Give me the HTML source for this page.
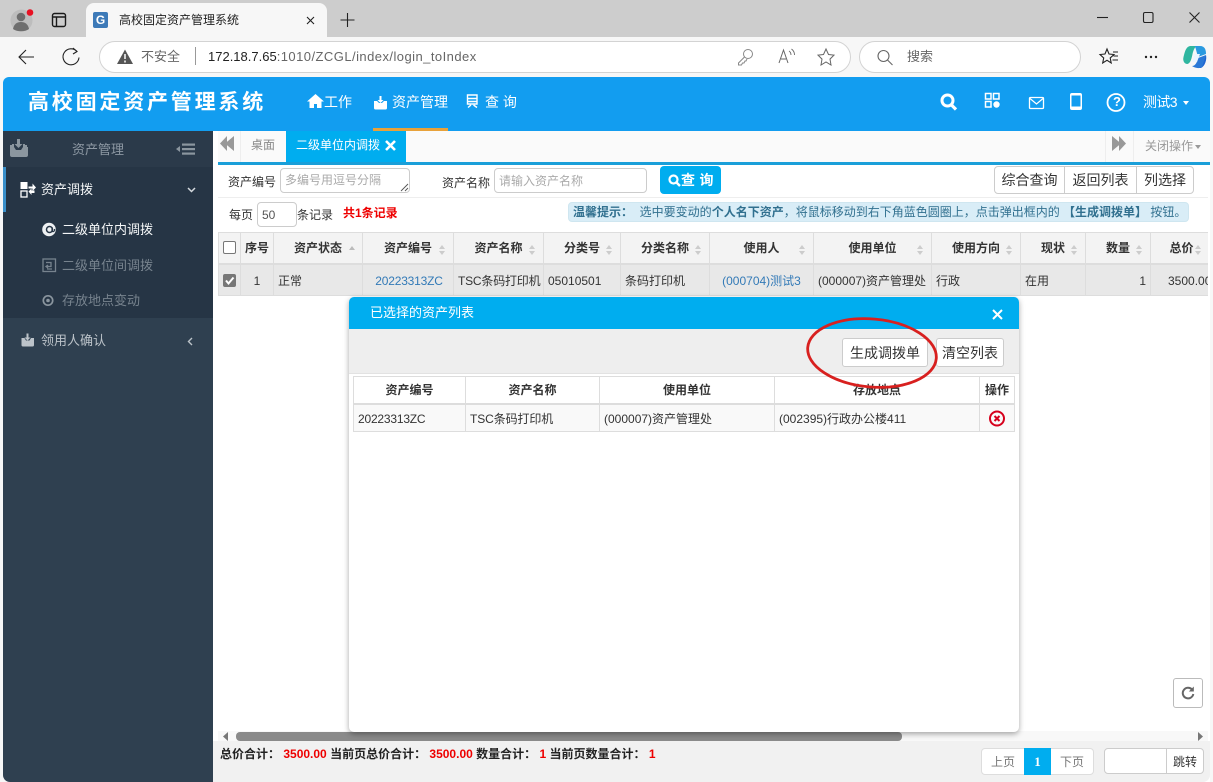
<!DOCTYPE html>
<html lang="zh"><head><meta charset="utf-8"><title>高校固定资产管理系统</title>
<style>
*{box-sizing:border-box}
html,body{margin:0;padding:0;width:1213px;height:782px;overflow:hidden;background:#f7f7f7;font-family:"Liberation Sans","Noto Sans CJK SC",sans-serif;font-size:12px;color:#333}
.a{position:absolute}
.t{position:absolute;white-space:nowrap;line-height:16px}
svg{position:absolute;overflow:visible}
.th{position:absolute;top:232px;height:33px;background:#f3f3f3;border-right:1px solid #ddd;border-top:1px solid #ddd;border-bottom:2px solid #ddd;font-weight:bold;font-size:12px;line-height:30px;text-align:center;color:#333}
.td{position:absolute;top:265px;height:31px;background:#e8e8e8;border-right:1px solid #ddd;border-bottom:1px solid #ddd;font-size:12px;line-height:32px;padding:0 4px;white-space:nowrap;overflow:hidden;color:#333}
.s{position:absolute;right:7px;top:12px;width:7px;height:10px}
.s:before{content:"";position:absolute;left:0;top:0;border:3.5px solid transparent;border-top:0;border-bottom:4px solid #ccc}
.s:after{content:"";position:absolute;left:0;top:6px;border:3.5px solid transparent;border-bottom:0;border-top:4px solid #ccc}
.btn{position:absolute;background:#fff;border:1px solid #ccc;font-size:14px;text-align:center;color:#333}
.mth{position:absolute;top:376px;height:29px;background:#fff;border:1px solid #ddd;border-left:0;border-bottom:2px solid #ddd;font-weight:bold;font-size:12px;line-height:27px;text-align:center}
.mtd{position:absolute;top:405px;height:27px;background:#f9f9f9;border-right:1px solid #ddd;border-bottom:1px solid #ddd;font-size:12px;line-height:28px;padding-left:4px;white-space:nowrap}
</style></head><body>

<!-- browser chrome -->
<div class="a" style="left:0;top:0;width:1213px;height:37px;background:#cdcdcd"></div>
<div class="a" style="left:0;top:37px;width:1213px;height:40px;background:#f7f7f7"></div>
<div class="a" style="left:86px;top:3px;width:241px;height:35px;background:#f7f7f7;border-radius:8px 8px 0 0"></div>
<svg style="left:0;top:0" width="120" height="37">
<circle cx="21.500" cy="20.500" r="11" fill="#bdbdbd"/><circle cx="21" cy="17" r="4.300" fill="#6e6e6e"/><path d="M13 29c1-5 4-7 8-7s7 2 8 7c-4 3-12 3-16 0z" fill="#6e6e6e"/>
<circle cx="30" cy="12.500" r="3.300" fill="#e81123"/>
<rect x="52.500" y="13.500" width="13" height="13" rx="2" fill="none" stroke="#1a1a1a" stroke-width="1.400"/><path d="M53 17h12M56.500 17v9" stroke="#1a1a1a" stroke-width="1.400" fill="none"/>
</svg>
<div class="a" style="left:93px;top:12px;width:15px;height:16px;background:#3d7ab8;border-radius:2px;color:#fff;font-weight:bold;font-size:12px;text-align:center;line-height:16px">G</div>
<div class="t" style="left:119px;top:12px;font-size:12px;color:#222">高校固定资产管理系统</div>
<svg style="left:300px;top:7px" width="60" height="30" fill="none" stroke="#222" stroke-width="1.100">
<path d="M7 10l7 7M14 10l-7 7"/><path d="M47.500 6v14M40.500 13h14"/></svg>
<svg style="left:1090px;top:0" width="123" height="37" fill="none" stroke="#222" stroke-width="1.100">
<path d="M7 17.500h11"/><rect x="53.500" y="12.500" width="9.500" height="10" rx="1.500"/><path d="M99.500 12.500l10 10M109.500 12.500l-10 10"/></svg>

<svg style="left:0;top:37px" width="100" height="40" fill="none" stroke="#222" stroke-width="1.100">
<path d="M34 20H19M26 13l-7 7 7 7"/><path d="M77 14.500a8 8 0 1 0 2 6" /><path d="M73 11l4 3.500-4 2.500" /></svg>
<div class="a" style="left:99px;top:41px;width:752px;height:32px;background:#fff;border:1px solid #d3d3d3;border-radius:16px"></div>
<svg style="left:116px;top:49px" width="20" height="16"><path d="M9 0.500L17 15H1z" fill="#555"/><path d="M9 5v5M9 11.500v2" stroke="#fff" stroke-width="1.500"/></svg>
<div class="t" style="left:141px;top:49px;font-size:13px;color:#666">不安全</div>
<div class="a" style="left:195px;top:47px;width:1px;height:18px;background:#999"></div>
<div class="t" style="left:208px;top:49px;font-size:13px;color:#666"><span style="color:#222">172.18.7.65</span><span style="letter-spacing:.45px">:1010/ZCGL/index/login_toIndex</span></div>
<svg style="left:730px;top:45px" width="110" height="24" fill="none" stroke="#888" stroke-width="1">
<circle cx="18" cy="9" r="4.500"/><path d="M14.500 12l-6 6v2h3l1-2h1.500l1-2h1l1-2"/>
<path d="M49 18l4.500-13 4.500 13M51 14h5" stroke="#666"/><path d="M59 6c1.500 1 2 2.500 2 4M61.500 4c2 1.500 3 3.500 3 6" stroke="#666" stroke-width="0.900"/>
<path d="M96 4l2.500 5.500 5.500.6-4 4 1 5.900-5-3-5 3 1-5.900-4-4 5.500-.6z" stroke="#666"/></svg>
<div class="a" style="left:859px;top:41px;width:222px;height:32px;background:#fff;border:1px solid #d3d3d3;border-radius:16px"></div>
<svg style="left:876px;top:49px" width="18" height="18" fill="none" stroke="#666" stroke-width="1.100"><circle cx="7.500" cy="7" r="5.500"/><path d="M11.500 11l5 5"/></svg>
<div class="t" style="left:907px;top:49px;font-size:13px;color:#666">搜索</div>
<svg style="left:1098px;top:45px" width="110" height="26" fill="none" stroke="#222" stroke-width="1.100">
<path d="M9 4l2 5 5 .5-3.800 3.500 1 5-4.200-2.700-4.300 2.700 1-5L2 9.500 7 9z"/><path d="M15 7h5M15.500 11h4.500M14.500 15h5.500" stroke-width="1"/>
<circle cx="48" cy="12" r="1.200" fill="#222" stroke="none"/><circle cx="53" cy="12" r="1.200" fill="#222" stroke="none"/><circle cx="58" cy="12" r="1.200" fill="#222" stroke="none"/>
</svg>
<svg style="left:1182px;top:45px" width="26" height="24">
<path d="M8 1C4 2 3 6 1.500 12c-1 4 1 7 4 7 3-1 4-5 5-10 1-4 2-7 5-8z" fill="#2fb6a0"/>
<path d="M13 1h5c5 0 6 4 6 8l-8 3z" fill="#2a9ae0"/>
<path d="M9 23h7c3-1 5-5 6-9l2-4c1 5-1 11-5 13z" fill="#1f66d1"/>
<path d="M10 21c3 0 5-3 6-8l8-3-4 12c-3 2-7 1-10-1z" fill="#2a78d6"/>
<path d="M13 9h5l-3 8h-5z" fill="#eaf5ff"/>
</svg>

<!-- app header -->
<div class="a" style="left:3px;top:77px;width:1207px;height:54px;background:#129df0;border-radius:6px 6px 0 0"></div>
<div class="t" style="left:28px;top:91px;font-size:21px;line-height:24px;font-weight:bold;color:#fff;letter-spacing:2.800px">高校固定资产管理系统</div>
<svg style="left:307px;top:93px" width="20" height="16" fill="#fff"><path d="M8.500 1L0 8.500h2.500V15H7v-4h3v4h4.500V8.500H17z"/></svg>
<div class="t" style="left:324px;top:94px;font-size:14px;color:#fff">工作</div>
<svg style="left:373px;top:95px" width="16" height="15"><path d="M1 6h3l2 2h3l2-2h3v7a1.500 1.500 0 0 1-1.500 1.500h-10A1.500 1.500 0 0 1 1 13z" fill="#fff"/><path d="M6.500 1h2v4h2L7.500 8l-3-3h2z" fill="#fff"/></svg>
<div class="t" style="left:392px;top:94px;font-size:14px;color:#fff">资产管理</div>
<div class="a" style="left:373px;top:128px;width:75px;height:3px;background:#e8a23a"></div>
<svg style="left:466px;top:94px" width="14" height="16" fill="none" stroke="#fff" stroke-width="1.400"><path d="M1.500 1h9.500v9H1.500zM1.500 4.500H11M1.500 7.500H11M2 13.500l3-2.500M11 13.500L7.500 11"/></svg>
<div class="t" style="left:485px;top:94px;font-size:14px;color:#fff">查 询</div>
<svg style="left:940px;top:92px" width="240" height="22" fill="none" stroke="#fff">
<circle cx="7.500" cy="8.500" r="5.500" stroke-width="3"/><path d="M11.500 13l4.500 4.500" stroke-width="3.200"/>
<rect x="45.500" y="1.500" width="5.500" height="5.500" stroke-width="1.500"/><rect x="53.500" y="1.500" width="5.500" height="5.500" stroke-width="1.500"/><rect x="45.500" y="9.500" width="5.500" height="5.500" stroke-width="1.500"/><circle cx="56.500" cy="12.500" r="3.200" fill="#fff" stroke="none"/>
<rect x="89.500" y="5.500" width="14" height="11" rx="1" stroke-width="1.300"/><path d="M90 6.500l6.500 5.500 6.500-5.500" stroke-width="1.200"/>
<rect x="130" y="1" width="12" height="17" rx="2" fill="#fff" stroke="none"/><rect x="131.500" y="3.500" width="9" height="11" fill="#129df0" stroke="none"/>
<circle cx="176" cy="10.500" r="8.500" stroke-width="1.800"/>
</svg>
<div class="t" style="left:1113px;top:94px;font-size:13px;font-weight:bold;color:#fff">?</div>
<div class="t" style="left:1143px;top:94px;font-size:14px;letter-spacing:-.6px;color:#fff">测试3</div>
<div class="a" style="left:1183px;top:101px;border:3.500px solid transparent;border-top:4px solid #fff;border-bottom:0"></div>

<!-- sidebar -->
<div class="a" style="left:3px;top:131px;width:210px;height:651px;background:#2f4050;border-radius:0 0 0 7px"></div>
<div class="a" style="left:3px;top:131px;width:210px;height:36px;background:#2b3a4a"></div>
<div class="a" style="left:3px;top:167px;width:210px;height:151px;background:#263545"></div>
<div class="a" style="left:3px;top:167px;width:3px;height:45px;background:#3a8fc9"></div>
<svg style="left:9px;top:138px" width="20" height="21"><path d="M1 8h3v-2M18 8h-3v-2" fill="none" stroke="#8b969f" stroke-width="2"/><path d="M1 9h4l2 3h5l2-3h5v8a2 2 0 0 1-2 2H3a2 2 0 0 1-2-2z" fill="#8b969f"/><path d="M8 1h3v5h2.500l-4 4-4-4H8z" fill="#8b969f"/></svg>
<div class="t" style="left:72px;top:142px;font-size:13px;color:#8d98a3">资产管理</div>
<svg style="left:176px;top:143px" width="20" height="13" fill="#8b969f"><path d="M0 6l4-3v6z"/><rect x="6" y="0.500" width="13" height="2.200"/><rect x="6" y="5" width="13" height="2.200"/><rect x="6" y="9.500" width="13" height="2.200"/></svg>
<svg style="left:20px;top:181px" width="17" height="17"><rect x="0.500" y="1" width="7" height="7" fill="#fff"/><rect x="1" y="10" width="6" height="6" fill="none" stroke="#fff" stroke-width="1.300"/><path d="M9 1h2v15H9z" fill="#263545"/><path d="M8.500 5.500h4V2.500l3.500 4-3.500 3.500v-2.500h-4zM8.500 10.500l3-3v2h3v2.500h-3v2z" fill="#fff"/></svg>
<div class="t" style="left:41px;top:182px;font-size:13px;color:#f4f6f7">资产调拨</div>
<svg style="left:187px;top:187px" width="9" height="6" fill="none" stroke="#d5dadf" stroke-width="1.500"><path d="M1 1L4.500 4.500 8 1"/></svg>
<svg style="left:42px;top:222px" width="15" height="15"><circle cx="7" cy="7.500" r="6.800" fill="#eef1f3"/><circle cx="7.500" cy="7.500" r="3" fill="none" stroke="#263545" stroke-width="1.500"/><path d="M10 5v4c1 1.500 3 0 2.500-2" fill="none" stroke="#263545" stroke-width="1.200"/></svg>
<div class="t" style="left:62px;top:222px;font-size:13px;color:#f4f6f7">二级单位内调拨</div>
<svg style="left:42px;top:258px" width="15" height="15" fill="none" stroke="#77838e" stroke-width="1.300"><rect x="1" y="1" width="12.500" height="12.500"/><path d="M4 4.500h5v4H5M6 7L4 8.500 6 10M10 11H5"/></svg>
<div class="t" style="left:62px;top:258px;font-size:13px;color:#77838e">二级单位间调拨</div>
<svg style="left:42px;top:294px" width="14" height="14"><circle cx="6" cy="6.500" r="4.700" fill="none" stroke="#8b969f" stroke-width="1.700"/><circle cx="6" cy="6.500" r="1.800" fill="#8b969f"/></svg>
<div class="t" style="left:62px;top:293px;font-size:13px;color:#77838e">存放地点变动</div>
<svg style="left:21px;top:333px" width="14" height="14"><path d="M0.500 5h3l1.500 2.500h3.500L10 5h3v7a1.500 1.500 0 0 1-1.500 1.500h-9.500A1.500 1.500 0 0 1 .5 12z" fill="#bcc3c9"/><path d="M5.500 0.500h2v4h2l-3 3-3-3h2z" fill="#bcc3c9"/></svg>
<div class="t" style="left:41px;top:333px;font-size:13px;color:#bcc3c9">领用人确认</div>
<svg style="left:187px;top:337px" width="7" height="9" fill="none" stroke="#bcc3c9" stroke-width="1.400"><path d="M5 1L1.500 4.500 5 8"/></svg>

<!-- main -->
<div class="a" style="left:213px;top:131px;width:997px;height:651px;background:#fff"></div>
<div class="a" style="left:218px;top:131px;width:992px;height:31px;background:#fafafa"></div>
<div class="a" style="left:213px;top:131px;width:5px;height:31px;background:#fff"></div>
<div class="a" style="left:218px;top:162px;width:992px;height:3px;background:#1a9fd9"></div>
<div class="a" style="left:240px;top:131px;width:1px;height:31px;background:#eee"></div>
<svg style="left:220px;top:136px" width="15" height="15" fill="#999"><path d="M7 0v15L0 7.500zM14 0v15L5 7.500z"/></svg>
<div class="t" style="left:251px;top:137px;font-size:12px;color:#8a8a8a">桌面</div>
<div class="a" style="left:286px;top:131px;width:120px;height:31px;background:#00adef"></div>
<div class="t" style="left:296px;top:137px;font-size:12px;color:#fff">二级单位内调拨</div>
<svg style="left:385px;top:140px" width="11" height="11" stroke="#fff" stroke-width="2.600"><path d="M1 1l9 9M10 1l-9 9"/></svg>
<div class="a" style="left:1105px;top:131px;width:1px;height:31px;background:#eee"></div>
<div class="a" style="left:1133px;top:131px;width:1px;height:31px;background:#eee"></div>
<svg style="left:1112px;top:136px" width="15" height="15" fill="#999"><path d="M0 0v15L9 7.500zM7 0v15L14 7.500z"/></svg>
<div class="t" style="left:1145px;top:138px;font-size:12px;color:#999">关闭操作</div>
<div class="a" style="left:1195px;top:145px;border:3.500px solid transparent;border-top:4px solid #999;border-bottom:0"></div>

<div class="t" style="left:228px;top:174px;color:#333">资产编号</div>
<div class="a" style="left:280px;top:168px;width:130px;height:25px;border:1px solid #ccc;border-radius:4px;background:#fff"></div>
<div class="t" style="left:285px;top:172px;color:#aaa">多编号用逗号分隔</div>
<svg style="left:400px;top:183px" width="9" height="9" stroke="#555" stroke-width=".9"><path d="M1 8l7-7M5 8l3-3"/></svg>
<div class="t" style="left:442px;top:175px;color:#333">资产名称</div>
<div class="a" style="left:494px;top:168px;width:153px;height:25px;border:1px solid #ccc;border-radius:4px;background:#fff"></div>
<div class="t" style="left:499px;top:173px;color:#aaa">请输入资产名称</div>
<div class="a" style="left:660px;top:166px;width:61px;height:28px;background:#00adef;border-radius:4px"></div>
<svg style="left:668px;top:174px" width="14" height="14" fill="none" stroke="#fff"><circle cx="5.500" cy="5.500" r="4" stroke-width="2.200"/><path d="M8.500 8.500L12 12" stroke-width="2.400"/></svg>
<div class="t" style="left:681px;top:172px;font-size:14px;font-weight:bold;color:#fff;letter-spacing:.3px">查 询</div>
<div class="btn" style="left:994px;top:166px;width:71px;height:28px;border-radius:4px 0 0 4px;line-height:27px">综合查询</div>
<div class="btn" style="left:1064px;top:166px;width:73px;height:28px;line-height:27px">返回列表</div>
<div class="btn" style="left:1136px;top:166px;width:58px;height:28px;border-radius:0 4px 4px 0;line-height:27px;font-size:14px">列选择</div>
<div class="a" style="left:218px;top:197px;width:990px;height:1px;background:#eee"></div>

<div class="t" style="left:229px;top:207px;color:#333">每页</div>
<div class="a" style="left:257px;top:202px;width:40px;height:25px;border:1px solid #ccc;border-radius:4px;background:#fff;padding-left:4px;line-height:24px;color:#555">50</div>
<div class="t" style="left:297px;top:207px;color:#333">条记录</div>
<div class="t" style="left:343px;top:205px;font-weight:bold;color:#e00">共1条记录</div>
<div class="a" style="left:568px;top:202px;width:621px;height:20px;background:#d9edf7;border:1px solid #cfe6f0;border-radius:4px"></div>
<div class="t" style="left:573px;top:204px;font-size:12px;color:#31708f"><b>温馨提示：</b>&nbsp; 选中要变动的<b>个人名下资产</b>，将鼠标移动到右下角蓝色圆圈上，点击弹出框内的 <b>【生成调拨单】</b> 按钮。</div>

<!-- table -->
<div class="th" style="left:218px;width:23px;border-left:1px solid #ddd"></div>
<div class="th" style="left:241px;width:33px">序号</div>
<div class="th" style="left:274px;width:89px">资产状态<i style="position:absolute;right:7px;top:13px;border:3.500px solid transparent;border-top:0;border-bottom:4px solid #bbb"></i></div>
<div class="th" style="left:363px;width:91px">资产编号<i class="s"></i></div>
<div class="th" style="left:454px;width:90px">资产名称<i class="s"></i></div>
<div class="th" style="left:544px;width:77px">分类号<i class="s"></i></div>
<div class="th" style="left:621px;width:89px">分类名称<i class="s"></i></div>
<div class="th" style="left:710px;width:104px">使用人<i class="s"></i></div>
<div class="th" style="left:814px;width:118px">使用单位<i class="s"></i></div>
<div class="th" style="left:932px;width:89px">使用方向<i class="s"></i></div>
<div class="th" style="left:1021px;width:65px">现状<i class="s"></i></div>
<div class="th" style="left:1086px;width:65px">数量<i class="s"></i></div>
<div class="th" style="left:1151px;width:57px;border-right:0;padding-left:4px">总价<i class="s" style="right:6px"></i></div>

<div class="td" style="left:218px;width:23px;border-left:1px solid #ddd"></div>
<div class="td" style="left:241px;width:33px;text-align:center;padding:0">1</div>
<div class="td" style="left:274px;width:89px">正常</div>
<div class="td" style="left:363px;width:91px;text-align:center;padding:0 0 0 2px;color:#337ab7;letter-spacing:-.2px">20223313ZC</div>
<div class="td" style="left:454px;width:90px;padding:0 0 0 4px;letter-spacing:-.2px">TSC条码打印机</div>
<div class="td" style="left:544px;width:77px">05010501</div>
<div class="td" style="left:621px;width:89px">条码打印机</div>
<div class="td" style="left:710px;width:104px;text-align:center;padding:0;color:#337ab7">(000704)测试3</div>
<div class="td" style="left:814px;width:118px">(000007)资产管理处</div>
<div class="td" style="left:932px;width:89px">行政</div>
<div class="td" style="left:1021px;width:65px">在用</div>
<div class="td" style="left:1086px;width:65px;text-align:right">1</div>
<div class="td" style="left:1151px;width:57px;border-right:0;padding:0 0 0 17px">3500.00</div>
<div class="a" style="left:223px;top:241px;width:13px;height:13px;background:#fff;border:1px solid #777;border-radius:2px"></div>
<div class="a" style="left:223px;top:274px;width:13px;height:13px;background:#777;border-radius:2px"></div>
<svg style="left:223px;top:274px" width="13" height="13" fill="none" stroke="#fff" stroke-width="2"><path d="M3 6.500l2.500 3 5-6"/></svg>

<!-- scrollbar -->
<div class="a" style="left:218px;top:731px;width:990px;height:10px;background:#f8f8f8"></div>
<div class="a" style="left:236px;top:732px;width:666px;height:9px;background:#8a8a8a;border-radius:4px"></div>
<svg style="left:222px;top:732px" width="8" height="9" fill="#777"><path d="M6 0v9L1 4.500z"/></svg>
<svg style="left:1197px;top:732px" width="8" height="9" fill="#777"><path d="M1 0v9l5-4.500z"/></svg>

<!-- refresh -->
<div class="a" style="left:1173px;top:678px;width:30px;height:30px;border:1px solid #bbb;border-radius:3px;background:#fff"></div>
<svg style="left:1181px;top:686px" width="14" height="14" fill="none" stroke="#666" stroke-width="2"><path d="M11 3.500a5.300 5.300 0 1 0 1.300 4.500"/><path d="M12.800 0.500v5h-5z" fill="#666" stroke="none"/></svg>

<!-- bottom bar -->
<div class="a" style="left:213px;top:741px;width:997px;height:41px;background:#f1f1f1;border-radius:0 0 7px 0"></div>
<div class="t" style="left:220px;top:746px;font-size:12px;font-weight:bold;color:#222">总价合计：<span style="color:#e00"> 3500.00</span> 当前页总价合计：<span style="color:#e00"> 3500.00</span> 数量合计：<span style="color:#e00"> 1</span> 当前页数量合计：<span style="color:#e00"> 1</span></div>
<div class="a" style="left:981px;top:748px;width:113px;height:27px;background:#fff;border:1px solid #ddd;border-radius:4px"></div>
<div class="t" style="left:991px;top:754px;color:#777">上页</div>
<div class="a" style="left:1024px;top:748px;width:27px;height:27px;background:#00adef;color:#fff;text-align:center;line-height:27px;font-family:'Liberation Serif',serif;font-weight:bold;font-size:13px">1</div>
<div class="t" style="left:1060px;top:754px;color:#777">下页</div>
<div class="a" style="left:1104px;top:748px;width:100px;height:26px;background:#fff;border:1px solid #ccc;border-radius:4px"></div>
<div class="a" style="left:1166px;top:749px;width:1px;height:25px;background:#ccc"></div>
<div class="t" style="left:1173px;top:754px;color:#333">跳转</div>

<!-- modal -->
<div class="a" style="left:349px;top:297px;width:670px;height:435px;background:#fff;border-radius:5px;box-shadow:0 2px 6px rgba(0,0,0,.35)"></div>
<div class="a" style="left:349px;top:297px;width:670px;height:32px;background:#00adef;border-radius:5px 5px 0 0"></div>
<div class="t" style="left:370px;top:305px;font-size:13px;color:#fff">已选择的资产列表</div>
<svg style="left:992px;top:309px" width="11" height="11" stroke="#fff" stroke-width="2"><path d="M1 1l9 9M10 1l-9 9"/></svg>
<div class="a" style="left:349px;top:329px;width:670px;height:44px;background:#eee"></div>
<div class="btn" style="left:842px;top:338px;width:86px;height:29px;border-radius:3px;line-height:28px">生成调拨单</div>
<div class="btn" style="left:936px;top:338px;width:68px;height:29px;border-radius:3px;line-height:28px">清空列表</div>
<div class="a" style="left:349px;top:373px;width:670px;height:1px;background:#e2e2e2"></div>

<div class="mth" style="left:353px;width:113px;border-left:1px solid #ddd">资产编号</div>
<div class="mth" style="left:466px;width:134px">资产名称</div>
<div class="mth" style="left:600px;width:175px">使用单位</div>
<div class="mth" style="left:775px;width:205px">存放地点</div>
<div class="mth" style="left:980px;width:35px">操作</div>
<div class="mtd" style="left:353px;width:113px;border-left:1px solid #ddd;letter-spacing:-.2px">20223313ZC</div>
<div class="mtd" style="left:466px;width:134px;letter-spacing:-.1px">TSC条码打印机</div>
<div class="mtd" style="left:600px;width:175px">(000007)资产管理处</div>
<div class="mtd" style="left:775px;width:205px">(002395)行政办公楼411</div>
<div class="mtd" style="left:980px;width:35px"></div>
<svg style="left:989px;top:410px" width="17" height="17" fill="none" stroke="#d6001c"><circle cx="8" cy="8.500" r="7" stroke-width="2"/><path d="M5.500 6l5 5M10.500 6l-5 5" stroke-width="2"/></svg>

<svg style="left:800px;top:310px" width="145" height="85" fill="none"><ellipse cx="72" cy="43" rx="64.500" ry="34" transform="rotate(5 72 43)" stroke="#d8201f" stroke-width="2.800"/></svg>
</body></html>
